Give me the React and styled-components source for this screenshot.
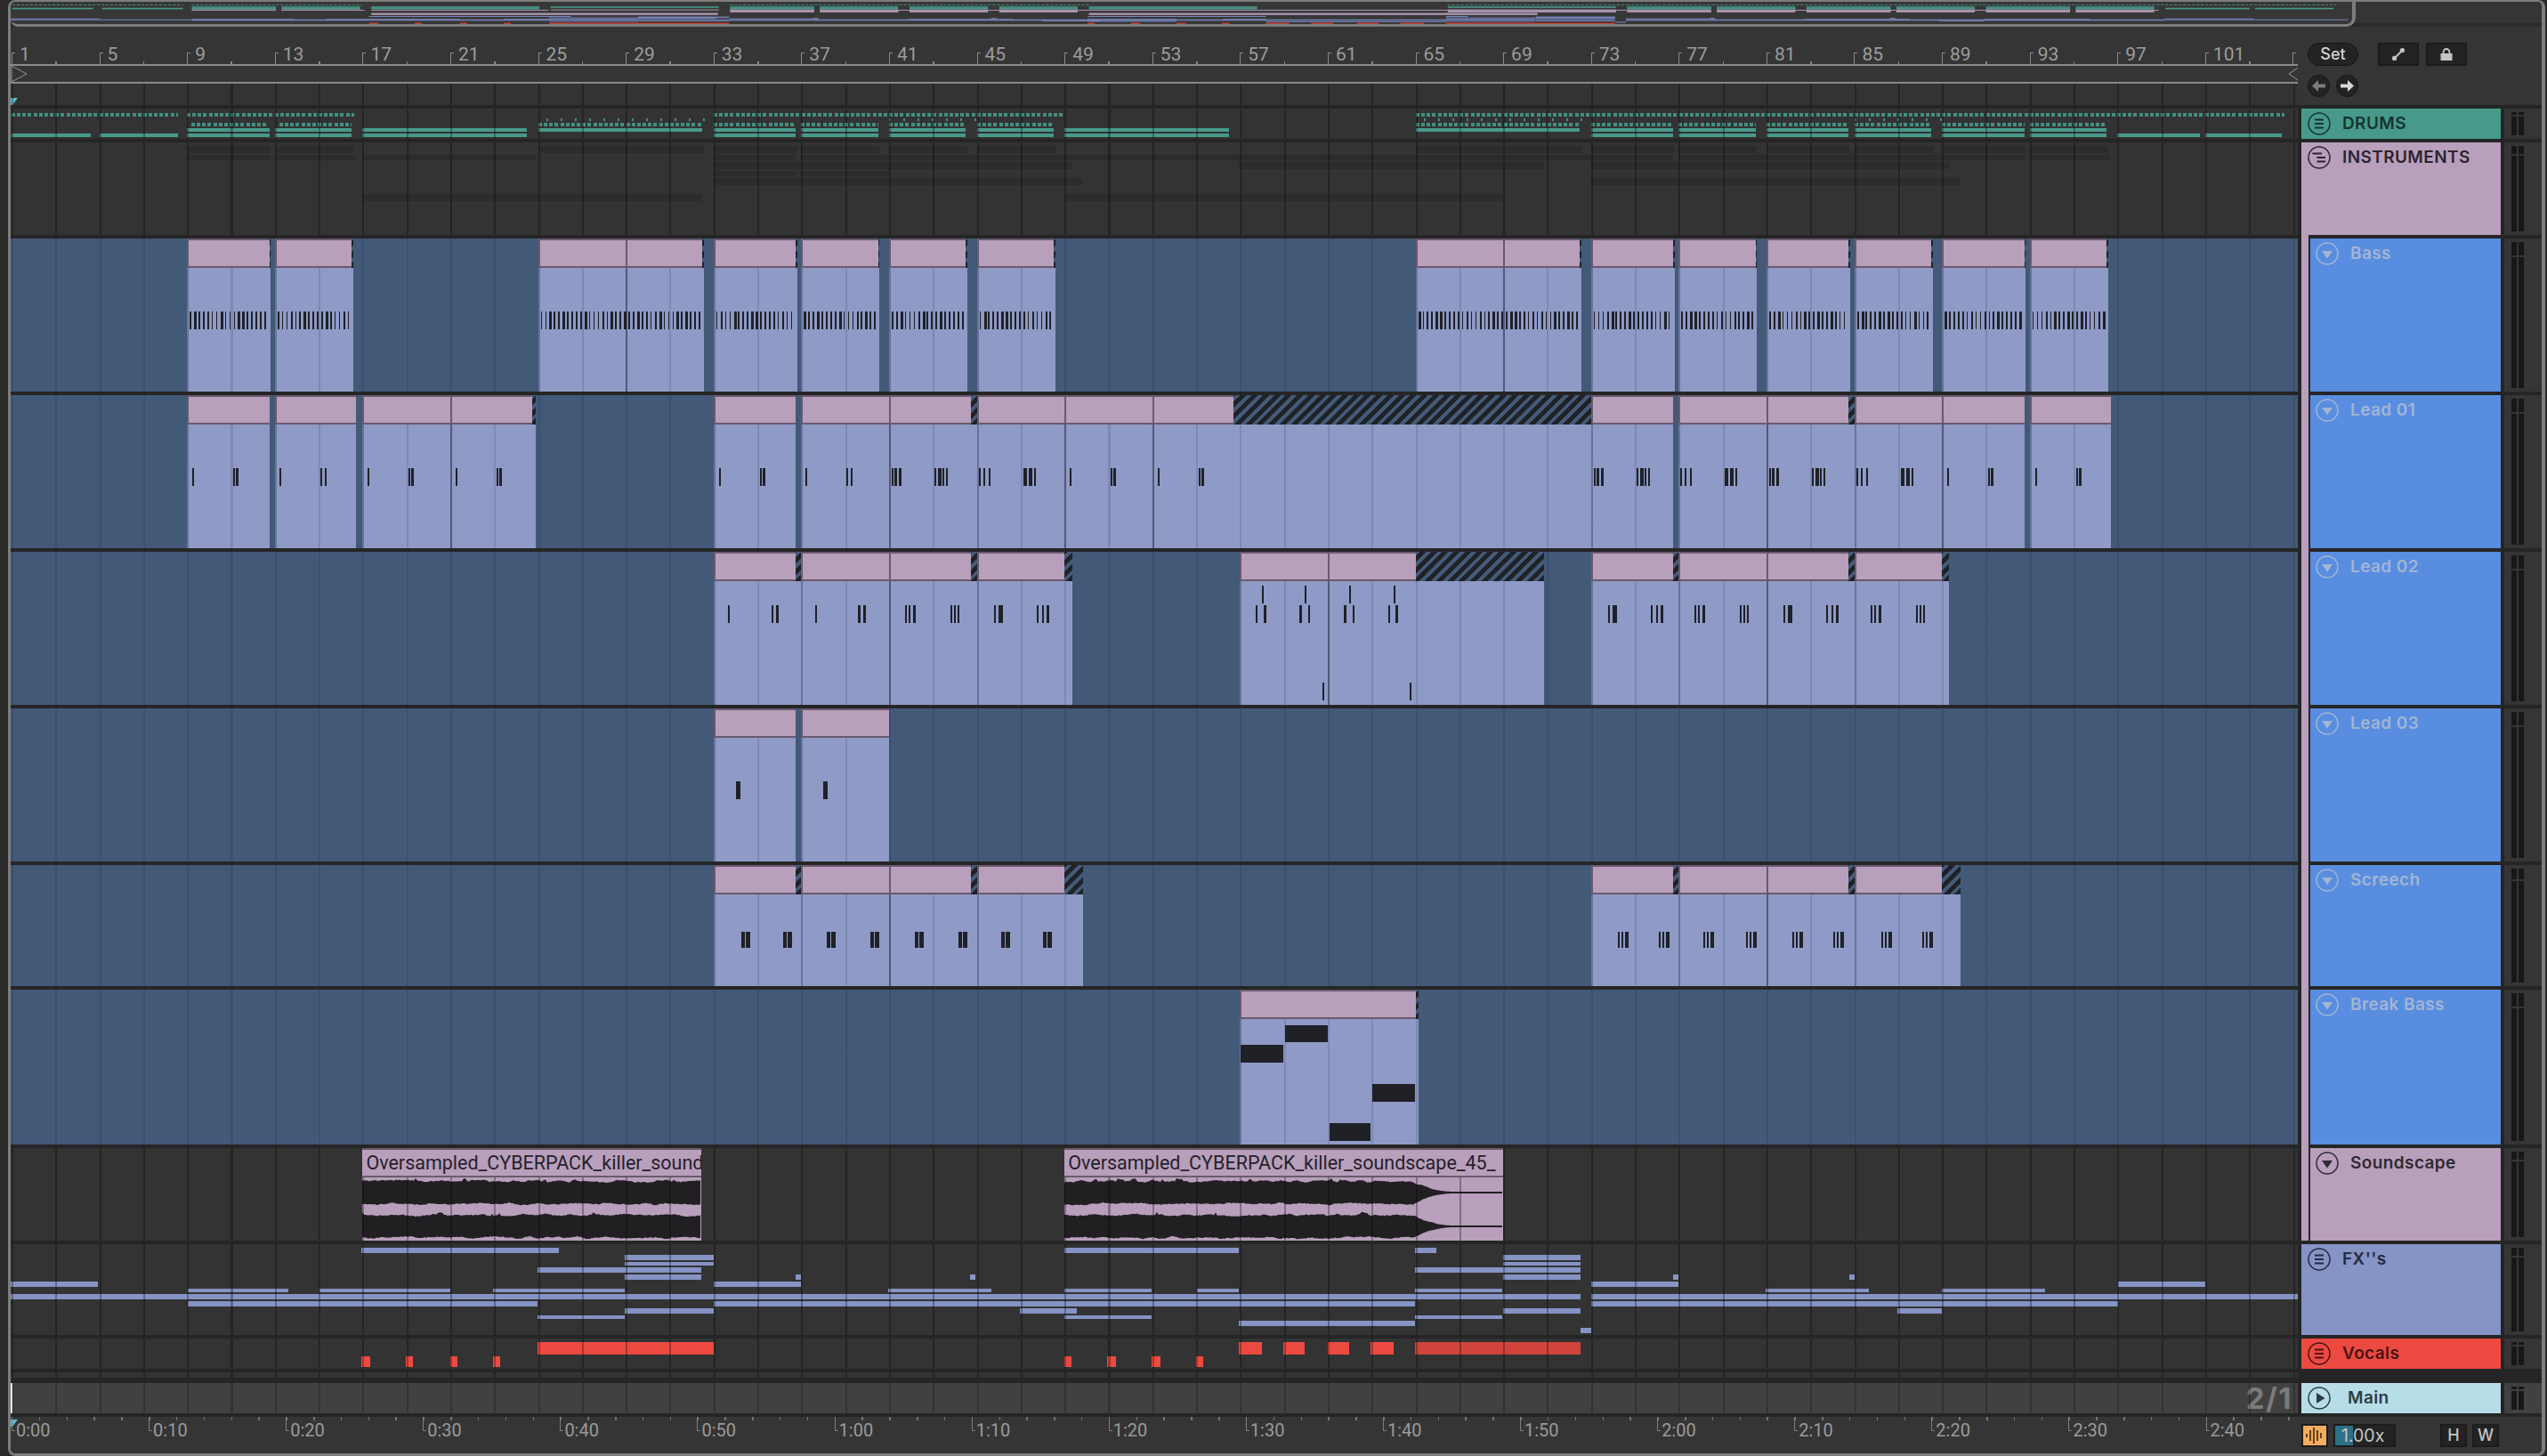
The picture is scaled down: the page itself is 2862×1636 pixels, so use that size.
import React from "react";
import styled, { createGlobalStyle } from "styled-components";

const BAR = 24.65;
const laneX = (bar) => 1 + (bar - 1) * BAR;
const pageX = (x) => x - 12;
const miniX = (bar) => 2 + (bar - 1) * 25.2;

const GlobalStyle = createGlobalStyle`
	html, body {
		margin: 0;
		padding: 0;
		background: #2a2a2a;
		overflow: hidden;
	}
	* {
		box-sizing: border-box;
	}
`;

const Screen = styled.div`
	width: 2862px;
	height: 1636px;
	padding: 0 2px 0 9px;
	background: #2a2a2a;
	font-family: Inter, "Liberation Sans", sans-serif;
`;

const Frame = styled.div`
	height: 100%;
	display: flex;
	flex-direction: column;
	overflow: hidden;
	background: #252525;
	border: solid #7d7d7d;
	border-width: 2px 4px 3px 3px;
	border-radius: 8px;
`;

/* overview strip */
const Overview = styled.div`
	display: flex;
	height: 28px;
	flex: none;
`;

const OverviewWindow = styled.div`
	width: 2635px;
	height: 28px;
	background: #373737;
	border: solid #7d7d7d;
	border-width: 0 4px 3px 0;
	border-radius: 0 0 10px 8px;
	overflow: hidden;
`;

const OverviewRest = styled.div`
	flex: 1;
	background: #353535;
	border-bottom: 4px solid #2b2b2b;
`;

/* top section */
const TopSection = styled.div`
	display: flex;
	flex: none;
	height: 92px;
	background: #353535;
	border-bottom: 4px solid #252525;
`;

const TopTimeline = styled.div`
	width: 2570px;
	display: flex;
	flex-direction: column;
`;

const BarRuler = styled.div`
	display: flex;
	height: 42px;
	padding-left: 1px;
	overflow: hidden;
	font-family: Roboto, sans-serif;
`;

const BarMark = styled.div`
	position: relative;
	flex: 0 0 98.6px;
	padding: 20px 0 0 9px;
	font-size: 21px;
	line-height: 22px;
	color: #9c9c9c;

	&:last-child {
		flex-basis: 10px;
	}

	&::before {
		content: "";
		position: absolute;
		left: 0;
		bottom: 0;
		width: 3px;
		height: 12px;
		border-left: 1.5px solid #8a8a8a;
		border-top: 1.5px solid #8a8a8a;
	}

	&::after {
		content: "";
		position: absolute;
		left: 49.3px;
		bottom: 0;
		width: 1.5px;
		height: 3px;
		background: #8a8a8a;
	}
`;

const LoopBar = styled.div`
	display: flex;
	justify-content: space-between;
	height: 22px;
	border-top: 2px solid #8a8a8a;
	border-bottom: 2px solid #8a8a8a;
`;

const LoopHandle = styled.svg`
	display: block;
	height: 18px;
	flex: none;
`;

const SidePanel = styled.div`
	flex: 1;
	padding: 18px 0 0 11px;
	display: flex;
	flex-direction: column;
	gap: 10px;
`;

const PanelRow = styled.div`
	display: flex;
	align-items: center;
	gap: ${(p) => p.$gap}px;
`;

const SetButton = styled.div`
	width: 57px;
	height: 26px;
	margin-right: 14px;
	border-radius: 13px;
	background: #232323;
	border: 1px solid #151515;
	color: #d2d2d2;
	font-size: 18px;
	font-weight: 500;
	line-height: 24px;
	text-align: center;
`;

const SquareButton = styled.div`
	width: 46px;
	height: 26px;
	display: flex;
	align-items: center;
	justify-content: center;
	background: #232323;
	border: 2px solid #1a1a1a;
	color: #c4c4c4;
`;

const RoundButton = styled.div`
	width: 25px;
	height: 25px;
	display: flex;
	align-items: center;
	justify-content: center;
	border-radius: 50%;
	background: #232323;
	border: 1px solid #151515;
	color: ${(p) => (p.$dim ? "#7c7c7c" : "#d8d8d8")};
`;

/* tracks */
const Row = styled.div`
	display: grid;
	flex: none;
	grid-template-columns: 2570px 224px 42px;
	column-gap: 4px;
	align-items: start;
	height: ${(p) => p.$h + p.$sep}px;
`;

const laneTones = {
	dark: { bg: "#333333", line: "rgba(0, 0, 0, 0.3)" },
	blue: { bg: "#425977", line: "rgba(10, 20, 50, 0.13)" },
	main: { bg: "#414141", line: "rgba(0, 0, 0, 0.22)" },
};

const Lane = styled.div`
	position: relative;
	isolation: isolate;
	height: ${(p) => p.$h}px;
	overflow: hidden;
	background: ${(p) => laneTones[p.$tone].bg};

	&::after {
		content: "";
		position: absolute;
		inset: 0 0 0 1px;
		z-index: 1;
		pointer-events: none;
		background: repeating-linear-gradient(
			90deg,
			${(p) => laneTones[p.$tone].line} 0 2px,
			transparent 2px 49.3px
		);
	}
`;

const MainLane = styled(Lane)`
	display: flex;
	align-items: center;
	justify-content: flex-end;
	padding-right: 6px;
`;

const Zoom = styled.div`
	font-size: 33px;
	font-weight: 700;
	letter-spacing: 1.5px;
	color: #7b7b7b;
`;

const Playhead = styled.div`
	position: absolute;
	left: 0;
	top: 0;
	width: 2px;
	height: 100%;
	background: #fff;
`;

const CueMark = styled.div`
	position: absolute;
	left: 0;
	top: ${(p) => p.$top}px;
	width: 8px;
	height: 8px;
	background: #55bcd6;
	clip-path: polygon(0 0, 100% 0, 25% 100%, 0 100%);
`;

const ClipBox = styled.div`
	position: absolute;
	top: 0;
	bottom: 0;
	display: flex;
	flex-direction: column;
`;

const ClipHeadRow = styled.div`
	position: relative;
	z-index: 2;
	display: flex;
	flex: none;
	height: 33px;
`;

const ClipHead = styled.div`
	height: 100%;
	min-width: 0;
	background: #b89fbb;
	border: solid #6a5a6e;
	border-width: 2px 0 2px 2px;
`;

const Hatch = styled.div`
	flex: none;
	height: 100%;
	background: repeating-linear-gradient(-45deg, #1f2226 0 5px, #435a78 5px 9px);
`;

const ClipBody = styled.div`
	position: relative;
	flex: 1;
	background: #8f9ac6;
	border-left: 2px solid #7681ab;
`;

const ClipSplit = styled.div`
	position: absolute;
	top: 0;
	bottom: 0;
	width: 2px;
	background: #5e6284;
`;

const Note = styled.div`
	position: absolute;
	background: #1f2127;
`;

const DrumNote = styled.div`
	position: absolute;
	background: ${(p) =>
		p.$period
			? `repeating-linear-gradient(90deg, #418f81 0 ${p.$dot}px, transparent ${p.$dot}px ${p.$period}px)`
			: "#479a8b"};
`;

const GhostBlock = styled.div`
	position: absolute;
	background: #2c2c2c;
`;

const FxNote = styled.div`
	position: absolute;
	background: #8593c5;
`;

const VocalNote = styled.div`
	position: absolute;
	background: ${(p) => (p.$dim ? "#d1443d" : "#ec4a41")};
`;

const AudioClip = styled.div`
	position: absolute;
	top: 0;
	bottom: 0;
	display: flex;
	flex-direction: column;
	background: #b89fbb;
`;

const AudioHead = styled.div`
	position: relative;
	z-index: 2;
	flex: none;
	height: 33px;
	padding-left: 4px;
	overflow: hidden;
	white-space: nowrap;
	background: #b89fbb;
	border: solid #6a5a6e;
	border-width: 2px 0;
	color: #25212a;
	font-family: Roboto, sans-serif;
	font-size: 21.5px;
	line-height: 29px;
`;

const Waveform = styled.svg`
	display: block;
	flex: 1;
`;

/* track headers */
const Head = styled.div`
	display: flex;
	align-items: flex-start;
	gap: ${(p) => p.$gap || 13}px;
	height: ${(p) => p.$h}px;
	padding: 4px 0 0 7px;
	background: ${(p) => p.$bg};
	color: ${(p) => p.$color};
`;

const GroupHead = styled(Head)`
	height: 100%;
	background:
		linear-gradient(${(p) => p.$bg}, ${(p) => p.$bg}) 0 0 / 100% ${(p) => p.$h}px no-repeat,
		linear-gradient(${(p) => p.$bg}, ${(p) => p.$bg}) 0 0 / 8px 100% no-repeat;
`;

const Stripe = styled.div`
	height: ${(p) => (p.$last ? `${p.$h}px` : "100%")};
	padding-left: 8px;
	background: linear-gradient(90deg, #b89fbb 8px, transparent 8px);
`;

const NestedHead = styled(Head)`
	padding-left: 6px;
	border-left: 2px solid #252525;
`;

const TrackName = styled.div`
	font-size: 19px;
	font-weight: 600;
	letter-spacing: 0.4px;
	line-height: 26px;
	white-space: nowrap;
`;

const IconBox = styled.svg`
	display: block;
	flex: none;
`;

const Meter = styled.div`
	display: flex;
	gap: 2px;
	height: ${(p) => p.$h}px;
	padding: 4px 20px 4px 8px;
	background: ${(p) => (p.$main ? "#414141" : "#353535")};
`;

const MeterChannel = styled.div`
	display: flex;
	flex: 1;
	flex-direction: column;
	gap: 2px;
`;

const MeterPeak = styled.div`
	height: ${(p) => p.$h}px;
	background: #171717;
`;

const MeterBar = styled.div`
	flex: 1;
	background: #171717;
`;

/* bottom */
const BottomBar = styled.div`
	display: flex;
	flex: 1;
	background: #353535;
`;

const TimeRuler = styled.div`
	position: relative;
	display: flex;
	width: 2570px;
	padding-left: 1px;
	overflow: hidden;
	background: repeating-linear-gradient(90deg, #747474 0 1.5px, transparent 1.5px 30.82px) 1px 0 / 100% 4px no-repeat;
	font-family: Roboto, sans-serif;
`;

const TimeMark = styled.div`
	position: relative;
	flex: 0 0 154.1px;
	padding: 3px 0 0 5px;
	font-size: 20px;
	line-height: 24px;
	color: #9a9a9a;

	&:last-child {
		flex-basis: 80px;
	}

	&::before {
		content: "";
		position: absolute;
		left: 0;
		top: 0;
		width: 3px;
		height: 15px;
		border-left: 1.5px solid #7e7e7e;
		border-bottom: 1.5px solid #7e7e7e;
	}
`;

const TransportBox = styled.div`
	display: flex;
	align-items: flex-start;
	flex: 1;
	padding: 8px 0 0 4px;
`;

const WaveToggle = styled.div`
	width: 30px;
	height: 26px;
	display: flex;
	align-items: center;
	justify-content: center;
	margin-right: 6px;
	background: #f5ac5f;
	border: 2px solid #1c1c1c;
	color: #3a2a16;
`;

const SpeedField = styled.div`
	position: relative;
	width: 70px;
	height: 26px;
	margin-right: 50px;
	padding-left: 7px;
	background: linear-gradient(90deg, #2e7086 22px, #232323 22px) border-box;
	border: 2px solid #1c1c1c;
	color: #c6c6c6;
	font-size: 19.5px;
	line-height: 22px;
`;

const KeyButton = styled.div`
	width: 30px;
	height: 26px;
	margin-right: 6px;
	background: #232323;
	border: 2px solid #1c1c1c;
	color: #c4c4c4;
	font-size: 18px;
	font-weight: 500;
	line-height: 22px;
	text-align: center;
`;

/* data */
const clip = (s, e, tail, splits) => ({ s, e, tail, splits: splits || [] });

const BASS = [
	clip(9, 12.75, 12.82), clip(13, 16.5, 16.57), clip(25, 32.5, 32.57, [29]),
	clip(33, 36.75, 36.82), clip(37, 40.5, 40.57), clip(41, 44.5, 44.57), clip(45, 48.5, 48.57),
	clip(65, 72.5, 72.57, [69]), clip(73, 76.75, 76.82), clip(77, 80.5, 80.57),
	clip(81, 84.75, 84.82), clip(85, 88.5, 88.57), clip(89, 92.75, 92.82), clip(93, 96.5, 96.57),
];

const LEAD_01 = [
	clip(9, 12.75), clip(13, 16.7), clip(17, 24.75, 24.9, [21]), clip(33, 36.75),
	clip(37, 44.75, 45, [41]), clip(45, 56.72, 73, [49, 53]), clip(73, 76.75),
	clip(77, 84.75, 85, [81]), clip(85, 92.75, undefined, [89]), clip(93, 96.7),
];

const LEAD_02 = [
	clip(33, 36.75, 37), clip(37, 44.75, 45, [41]), clip(45, 49, 49.35),
	clip(57, 65, 70.85, [61]), clip(73, 76.75, 77), clip(77, 84.75, 85, [81]), clip(85, 89, 89.3),
];

const LEAD_03 = [clip(33, 36.75), clip(37, 41)];

const SCREECH = [
	clip(33, 36.75, 37), clip(37, 44.75, 45, [41]), clip(45, 49, 49.85),
	clip(73, 76.75, 77), clip(77, 84.75, 85, [81]), clip(85, 89, 89.85),
];

const BREAK_BASS = [clip(57, 65, 65.14)];

const SOUNDSCAPE = [
	{ s: 17, e: 32.46, name: "Oversampled_CYBERPACK_killer_soundscape_45_", fade: false },
	{ s: 49, e: 69, name: "Oversampled_CYBERPACK_killer_soundscape_45_", fade: true },
];

const phrase = (bar, list, y, h) =>
	list.map(([x, w]) => ({ x: laneX(bar) + x, w, y, h }));

const P1 = [[6, 2], [52, 2], [55, 3]];
const P2 = [[5, 2], [51, 2], [56, 2]];
const P3 = [[3, 2], [6, 3], [11, 3], [51, 2], [55, 4], [60, 2], [64, 2]];
const P4 = [[2, 2], [7, 2], [13, 2], [52, 4], [58, 4], [64, 2]];

const LEAD_01_NOTES = [
	[9, P1], [13, P2], [17, P1], [21, P1], [33, P1], [37, P2], [41, P3], [45, P4],
	[49, P1], [53, P1], [73, P3], [77, P4], [81, P3], [85, P4], [89, P1], [93, P1],
].flatMap(([bar, list]) => phrase(bar, list, 82, 20));

const Q1 = [[16, 2], [65, 2], [70, 3]];
const Q2 = [[16, 2], [64, 3], [70, 3]];
const Q3 = [[18, 2], [22, 2], [27, 3], [69, 2], [73, 2], [77, 2]];
const Q4 = [[19, 2], [24, 3], [27, 2], [67, 2], [73, 2], [78, 3]];

const LEAD_02_NOTES = [
	...[[33, Q1], [37, Q2], [41, Q3], [45, Q4], [73, Q4], [77, Q3], [81, Q4], [85, Q3]].flatMap(
		([bar, list]) => phrase(bar, list, 60, 20),
	),
	...phrase(57, [[18, 2], [27, 3], [67, 3], [77, 2], [117, 3], [127, 2], [167, 2], [175, 3]], 60, 20),
	...phrase(57, [[25, 2], [73, 2], [123, 2], [173, 2]], 38, 20),
	...phrase(57, [[93, 2], [191, 2]], 147, 20),
];

const LEAD_03_NOTES = [
	{ x: pageX(827), w: 5, y: 82, h: 20 },
	{ x: pageX(925), w: 5, y: 82, h: 20 },
];

const SCREECH_NOTES = [
	...[838, 885, 934, 983, 1033, 1082, 1130, 1177].flatMap((c) => [
		{ x: pageX(c - 5), w: 4, y: 75, h: 18 },
		{ x: pageX(c), w: 5, y: 75, h: 18 },
	]),
	...[1824, 1870, 1920, 1968, 2020, 2066, 2120, 2166].flatMap((c) => [
		{ x: pageX(c - 6), w: 2, y: 75, h: 18 },
		{ x: pageX(c - 2), w: 2, y: 75, h: 18 },
		{ x: pageX(c + 2), w: 4, y: 75, h: 18 },
	]),
];

const BREAK_NOTES = [
	{ x: pageX(1394), w: 48, y: 62, h: 20 },
	{ x: pageX(1444), w: 48, y: 40, h: 19 },
	{ x: pageX(1494), w: 46, y: 150, h: 20 },
	{ x: pageX(1542), w: 48, y: 106, h: 20 },
];

const BASS_WIDTHS = [1.6, 2.4, 1.6, 1.6, 2.4, 1.6, 1.6, 3, 1.6, 1.6, 1.6, 2.4, 3, 1.6, 1.6, 1.6, 2.4];
const BASS_NOTES = BASS.flatMap((c, ci) => {
	const notes = [];
	const end = laneX(c.e) - 2;
	let i = ci;
	for (let x = laneX(c.s) + 3; x < end; x += 4.93) {
		notes.push({ x, w: BASS_WIDTHS[i % BASS_WIDTHS.length], y: 82, h: 20 });
		i += 1;
	}
	return notes;
});

const DRUM_DOTS = [
	{ y: 5, h: 3.5, spans: [[1, 8.6], [9, 16.6], [33, 49], [65, 73], [73, 97], [97, 104.6]], period: 6.16, dot: 4 },
	{ y: 10.5, h: 3.5, spans: [[25.4, 33], [41, 45], [65.4, 73], [85, 89]], period: 16, dot: 2 },
	{ y: 16, h: 4, spans: [[9.2, 12.6], [13.2, 16.5], [25, 32.5], [33, 36.75], [37, 40.5], [41, 44.5], [45, 48.5], [65, 72.5], [73, 76.75], [77, 80.5], [81, 84.75], [85, 88.5], [89, 92.75], [93, 96.5]], period: 6.16, dot: 4 },
];

const CORE_SPANS = [[9, 12.75], [13, 16.5], [17, 24.5], [33, 36.75], [37, 40.5], [41, 44.5], [45, 48.5], [49, 56.5], [73, 76.75], [77, 80.5], [81, 84.75], [85, 88.5], [89, 92.75], [93, 96.5]];

const DRUM_SOLIDS = [
	{ y: 22, h: 4, spans: [...CORE_SPANS, [25, 32.5], [65, 72.5]] },
	{ y: 28, h: 4, spans: [[1, 4.6], [5, 8.6], ...CORE_SPANS, [97, 100.75], [101, 104.5]] },
];

const spanOf = (c) => [c.s, c.tail || c.e];

const GHOST_ROWS = [
	{ y: 4, h: 8, spans: BASS.map(spanOf) },
	{ y: 14, h: 6, spans: LEAD_01.map(spanOf) },
	{ y: 22, h: 8, spans: LEAD_02.map(spanOf) },
	{ y: 32, h: 6, spans: LEAD_03.map(spanOf) },
	{ y: 40, h: 8, spans: SCREECH.map(spanOf) },
	{ y: 58, h: 8, spans: SOUNDSCAPE.map((c) => [c.s, c.e]) },
];

const FX_ROWS = [
	{ y: 1402, h: 6, spans: [[406, 628], [1196, 1392], [1590, 1614]] },
	{ y: 1410, h: 6, spans: [[702, 802], [1689, 1776]] },
	{ y: 1418, h: 4, spans: [[702, 802], [1689, 1776]] },
	{ y: 1424, h: 6, spans: [[604, 788], [1590, 1776]] },
	{ y: 1432, h: 6, spans: [[702, 788], [894, 900], [1090, 1096], [1689, 1776], [1880, 1886], [2078, 2084]] },
	{ y: 1440, h: 6, spans: [[12, 110], [802, 900], [1788, 1886], [2380, 2478]] },
	{ y: 1448, h: 4, spans: [[211, 324], [359, 506], [554, 702], [998, 1114], [1196, 1294], [1345, 1392], [1590, 1688], [1984, 2100], [2182, 2298]] },
	{ y: 1454, h: 6, spans: [[12, 1776], [1788, 2582]] },
	{ y: 1462, h: 6, spans: [[211, 604], [802, 1590], [1788, 2380]] },
	{ y: 1470, h: 6, spans: [[702, 802], [1146, 1210], [1689, 1776], [2132, 2182]] },
	{ y: 1478, h: 4, spans: [[604, 702], [1196, 1294], [1590, 1688]] },
	{ y: 1484, h: 6, spans: [[1392, 1590]] },
	{ y: 1492, h: 6, spans: [[1776, 1788]] },
];

const VOCALS = [
	{ y: 4, h: 14, spans: [[604, 802], [1392, 1418], [1442, 1466], [1492, 1516], [1540, 1566]] },
	{ y: 4, h: 14, dim: true, spans: [[1590, 1776]] },
	{ y: 20, h: 12, spans: [[406, 416], [456, 464], [506, 514], [554, 562], [1196, 1204], [1244, 1254], [1294, 1304], [1344, 1352]] },
];

const BAR_LABELS = Array.from({ length: 27 }, (_, i) => 1 + i * 4);
const TIME_LABELS = Array.from({ length: 17 }, (_, i) => {
	const total = i * 10;
	return `${Math.floor(total / 60)}:${String(total % 60).padStart(2, "0")}`;
});

/* deterministic noise for the wave forms */
const rnd = (i, seed) => {
	const v = Math.sin(i * 12.9898 + seed * 78.233) * 43758.5453;
	return v - Math.floor(v);
};

// noise that drifts over a few pixels, so the outline has bumps and not only spikes
const bumps = (x, seed, step) => {
	const i = Math.floor(x / step);
	const t = x / step - i;
	const k = t * t * (3 - 2 * t);
	return rnd(i, seed) * (1 - k) + rnd(i + 1, seed) * k;
};

const channelPath = (width, cy, seed, fadeAt) => {
	const top = [];
	const bottom = [];
	for (let x = 0; x <= width; x += 2) {
		let up = 10.8 + bumps(x, seed, 9) * 2.6 + rnd(x, seed) * 1.2;
		let down = 10.8 + bumps(x, seed + 4, 11) * 2.6 + rnd(x, seed + 5) * 1.2;
		if (bumps(x, seed + 9, 5) > 0.93) up += 2.5;
		if (fadeAt) {
			const k = Math.min(1, Math.max(0, (x - fadeAt) / 44));
			const fade = (1 - k) * (1 - k);
			up = up * fade + 1.1 * (1 - fade);
			down = down * fade + 1.1 * (1 - fade);
		}
		top.push(`${x},${(cy - up).toFixed(1)}`);
		bottom.unshift(`${x},${(cy + down).toFixed(1)}`);
	}
	return `M${top.join("L")}L${bottom.join("L")}Z`;
};

/* small drawings */
const TrackIcon = ({ kind }) => (
	<IconBox width="26" height="26" viewBox="0 0 26 26" fill="none" stroke="currentColor">
		<circle cx="13" cy="13" r="12" strokeWidth="1.5" />
		{kind === "lines" && (
			<path d="M8 8.6H18M8 13H18M8 17.4H18" strokeWidth="2" />
		)}
		{kind === "stagger" && (
			<path d="M5.5 8.6H16M10.5 13H20M10.5 17.4H20" strokeWidth="2" />
		)}
		{kind === "down" && <path d="M7 10H19L13 18.5Z" fill="currentColor" stroke="none" />}
		{kind === "play" && <path d="M10 7L19.5 13L10 19Z" fill="currentColor" stroke="none" />}
	</IconBox>
);

const LinkIcon = () => (
	<IconBox width="16" height="16" viewBox="0 0 16 16" fill="currentColor" stroke="currentColor">
		<path d="M4 12L12 4" strokeWidth="2" />
		<circle cx="3.6" cy="12.4" r="2.6" stroke="none" />
		<circle cx="12.4" cy="3.6" r="2.6" stroke="none" />
	</IconBox>
);

const LockIcon = () => (
	<IconBox width="16" height="16" viewBox="0 0 16 16" fill="none">
		<path d="M4.6 8V5.4a3.4 3.4 0 0 1 6.8 0V8" stroke="currentColor" strokeWidth="1.8" />
		<rect x="1.5" y="7" width="13" height="8" fill="currentColor" />
	</IconBox>
);

const ArrowIcon = ({ flip }) => (
	<IconBox width="17" height="15" viewBox="0 0 17 15" fill="currentColor">
		<path d={flip ? "M16 7.5L9 1V5.6H1V9.4H9V14Z" : "M1 7.5L8 1V5.6H16V9.4H8V14Z"} />
	</IconBox>
);

const WaveIcon = () => (
	<IconBox width="22" height="18" viewBox="0 0 22 18" stroke="currentColor" strokeWidth="1.6">
		<path d="M2 7V11M6 3V15M10 0V18M14 3V15M18 6V12" />
	</IconBox>
);

const OverviewMap = () => {
	const teal = [...DRUM_SOLIDS[0].spans.map((s) => [...s, 5.2]), ...DRUM_SOLIDS[1].spans.map((s) => [...s, 6.8])];
	return (
		<svg width="2631" height="25" viewBox="0 0 2631 25">
			{DRUM_DOTS[0].spans.map(([s, e]) => (
				<line key={s} x1={miniX(s)} x2={miniX(e)} y1="3.5" y2="3.5" stroke="#3f8a7d" strokeDasharray="3 2" />
			))}
			{teal.map(([s, e, y]) => (
				<rect key={`${s}-${y}`} x={miniX(s)} y={y} width={miniX(e) - miniX(s)} height="1.6" fill="#479a8b" />
			))}
			{BASS.map((c) => (
				<rect key={c.s} x={miniX(c.s)} y="8.6" width={miniX(c.e) - miniX(c.s)} height={c.s >= 33 ? 3.4 : 1} fill="#a893ad" />
			))}
			{LEAD_01.map((c) => (
				<rect key={c.s} x={miniX(c.s)} y="9" width={miniX(c.tail || c.e) - miniX(c.s)} height="1" fill="#a893ad" />
			))}
			{SOUNDSCAPE.map((c) => (
				<rect key={c.s} x={miniX(c.s)} y="12.5" width={miniX(c.e) - miniX(c.s)} height="2.4" fill="#a893ad" />
			))}
			{FX_ROWS.flatMap((row) =>
				row.spans.map(([a, b]) => (
					<rect
						key={`${row.y}-${a}`}
						x={(a - 12) * 1.022}
						y={16 + (row.y - 1402) / 14}
						width={(b - a) * 1.022}
						height="1"
						fill="#7885bb"
					/>
				)),
			)}
			{VOCALS.flatMap((row) =>
				row.spans.map(([a, b]) => (
					<rect key={`${row.y}-${a}`} x={(a - 12) * 1.022} y="23.6" width={(b - a) * 1.022} height="1.4" fill="#c63f38" />
				)),
			)}
		</svg>
	);
};

const MidiClip = ({ c }) => {
	const stops = [c.s, ...c.splits, c.e];
	const end = c.tail || c.e;
	const left = laneX(c.s);
	const width = laneX(end) - left;
	return (
		<ClipBox style={{ left, width }}>
			<ClipHeadRow>
				{stops.slice(1).map((stop, i) => (
					<ClipHead key={stop} style={{ width: (stop - stops[i]) * BAR }} />
				))}
				{c.tail && <Hatch style={{ width: (c.tail - c.e) * BAR }} />}
			</ClipHeadRow>
			<ClipBody>
				{c.splits.map((bar) => (
					<ClipSplit key={bar} style={{ left: (bar - c.s) * BAR - 2 }} />
				))}
			</ClipBody>
		</ClipBox>
	);
};

const Meters = ({ h, main }) => (
	<Meter $h={h} $main={main}>
		{[0, 1].map((n) => (
			<MeterChannel key={n}>
				<MeterPeak $h={Math.round(h * 0.088)} />
				<MeterBar />
			</MeterChannel>
		))}
	</Meter>
);

const BlueTrack = ({ name, h, clips, notes, sep = 4 }) => (
	<Row $h={h} $sep={sep}>
		<Lane $h={h} $tone="blue">
			{clips.map((c) => (
				<MidiClip key={c.s} c={c} />
			))}
			{notes.map((n, i) => (
				<Note key={i} style={{ left: n.x, top: n.y, width: n.w, height: n.h }} />
			))}
		</Lane>
		<Stripe>
			<NestedHead $h={h} $bg="#588de0" $color="#a3b5d3">
				<TrackIcon kind="down" />
				<TrackName>{name}</TrackName>
			</NestedHead>
		</Stripe>
		<Meters h={h} />
	</Row>
);

const App = () => (
	<>
		<GlobalStyle />
		<Screen>
			<Frame>
				<Overview>
					<OverviewWindow>
						<OverviewMap />
					</OverviewWindow>
					<OverviewRest />
				</Overview>

				<TopSection>
					<TopTimeline>
						<BarRuler>
							{BAR_LABELS.map((bar) => (
								<BarMark key={bar}>{bar === 105 ? "" : bar}</BarMark>
							))}
						</BarRuler>
						<LoopBar>
							<LoopHandle width="19" viewBox="0 0 19 18" fill="none" stroke="#979797">
								<path d="M1 0V18L18 9Z" />
							</LoopHandle>
							<LoopHandle width="11" viewBox="0 0 11 18" fill="none" stroke="#979797">
								<path d="M11 2L1 9L11 16" />
							</LoopHandle>
						</LoopBar>
						<Lane $h={24} $tone="dark">
							<CueMark $top={16} />
						</Lane>
					</TopTimeline>
					<SidePanel>
						<PanelRow $gap={8}>
							<SetButton>Set</SetButton>
							<SquareButton>
								<LinkIcon />
							</SquareButton>
							<SquareButton>
								<LockIcon />
							</SquareButton>
						</PanelRow>
						<PanelRow $gap={7}>
							<RoundButton $dim>
								<ArrowIcon />
							</RoundButton>
							<RoundButton>
								<ArrowIcon flip />
							</RoundButton>
						</PanelRow>
					</SidePanel>
				</TopSection>

				<Row $h={34} $sep={4}>
					<Lane $h={34} $tone="dark">
						{DRUM_DOTS.flatMap((row) =>
							row.spans.map(([s, e]) => (
								<DrumNote
									key={`${row.y}-${s}`}
									$period={row.period}
									$dot={row.dot}
									style={{ left: laneX(s), width: (e - s) * BAR, top: row.y, height: row.h }}
								/>
							)),
						)}
						{DRUM_SOLIDS.flatMap((row) =>
							row.spans.map(([s, e]) => (
								<DrumNote
									key={`${row.y}-${s}`}
									style={{ left: laneX(s), width: (e - s) * BAR, top: row.y, height: row.h }}
								/>
							)),
						)}
					</Lane>
					<Head $h={34} $bg="#479a8b" $color="#17332f">
						<TrackIcon kind="lines" />
						<TrackName>DRUMS</TrackName>
					</Head>
					<Meters h={34} />
				</Row>

				<Row $h={104} $sep={4}>
					<Lane $h={104} $tone="dark">
						{GHOST_ROWS.flatMap((row) =>
							row.spans.map(([s, e]) => (
								<GhostBlock
									key={`${row.y}-${s}`}
									style={{ left: laneX(s), width: (e - s) * BAR, top: row.y, height: row.h }}
								/>
							)),
						)}
					</Lane>
					<GroupHead $h={104} $bg="#b89fbb" $color="#2a2530">
						<TrackIcon kind="stagger" />
						<TrackName>INSTRUMENTS</TrackName>
					</GroupHead>
					<Meters h={104} />
				</Row>

				<BlueTrack name="Bass" h={172} clips={BASS} notes={BASS_NOTES} />
				<BlueTrack name="Lead 01" h={172} clips={LEAD_01} notes={LEAD_01_NOTES} />
				<BlueTrack name="Lead 02" h={172} clips={LEAD_02} notes={LEAD_02_NOTES} />
				<BlueTrack name="Lead 03" h={172} clips={LEAD_03} notes={LEAD_03_NOTES} />
				<BlueTrack name="Screech" h={136} clips={SCREECH} notes={SCREECH_NOTES} />
				<BlueTrack name="Break Bass" h={174} clips={BREAK_BASS} notes={BREAK_NOTES} />

				<Row $h={104} $sep={4}>
					<Lane $h={104} $tone="dark">
						{SOUNDSCAPE.map((c) => {
							const width = (c.e - c.s) * BAR;
							const fadeAt = c.fade ? 392 : 0;
							return (
								<AudioClip key={c.s} style={{ left: laneX(c.s), width }}>
									<AudioHead>{c.name}</AudioHead>
									<Waveform viewBox={`0 0 ${width} 71`} width={width} height="71" fill="#211f22">
										<path d={channelPath(width, 17, c.s, fadeAt)} />
										<path d={channelPath(width, 55, c.s + 1, fadeAt)} />
									</Waveform>
								</AudioClip>
							);
						})}
					</Lane>
					<Stripe $last $h={104}>
						<NestedHead $h={104} $bg="#b89fbb" $color="#2f2a33">
							<TrackIcon kind="down" />
							<TrackName>Soundscape</TrackName>
						</NestedHead>
					</Stripe>
					<Meters h={104} />
				</Row>

				<Row $h={102} $sep={4}>
					<Lane $h={102} $tone="dark">
						{FX_ROWS.flatMap((row) =>
							row.spans.map(([a, b]) => (
								<FxNote
									key={`${row.y}-${a}`}
									style={{ left: pageX(a), width: b - a, top: row.y - 1398, height: row.h }}
								/>
							)),
						)}
					</Lane>
					<Head $h={102} $bg="#8593c5" $color="#262a40">
						<TrackIcon kind="lines" />
						<TrackName>FX''s</TrackName>
					</Head>
					<Meters h={102} />
				</Row>

				<Row $h={34} $sep={4}>
					<Lane $h={34} $tone="dark">
						{VOCALS.flatMap((row) =>
							row.spans.map(([a, b]) => (
								<VocalNote
									key={`${row.y}-${a}`}
									$dim={row.dim}
									style={{ left: pageX(a), width: b - a, top: row.y, height: row.h }}
								/>
							)),
						)}
					</Lane>
					<Head $h={34} $bg="#ec4a41" $color="#4a1210">
						<TrackIcon kind="lines" />
						<TrackName>Vocals</TrackName>
					</Head>
					<Meters h={34} />
				</Row>

				<Row $h={6} $sep={6}>
					<Lane $h={6} $tone="dark" />
				</Row>

				<Row $h={34} $sep={4}>
					<MainLane $h={34} $tone="main">
						<Playhead />
						<Zoom>2/1</Zoom>
					</MainLane>
					<Head $h={34} $bg="#b7dde8" $color="#2d3c42" $gap={19}>
						<TrackIcon kind="play" />
						<TrackName>Main</TrackName>
					</Head>
					<Meters h={34} main />
				</Row>

				<BottomBar>
					<TimeRuler>
						<CueMark $top={3} />
						{TIME_LABELS.map((label) => (
							<TimeMark key={label}>{label}</TimeMark>
						))}
					</TimeRuler>
					<TransportBox>
						<WaveToggle>
							<WaveIcon />
						</WaveToggle>
						<SpeedField>1.00x</SpeedField>
						<KeyButton>H</KeyButton>
						<KeyButton>W</KeyButton>
					</TransportBox>
				</BottomBar>
			</Frame>
		</Screen>
	</>
);

export default App;
